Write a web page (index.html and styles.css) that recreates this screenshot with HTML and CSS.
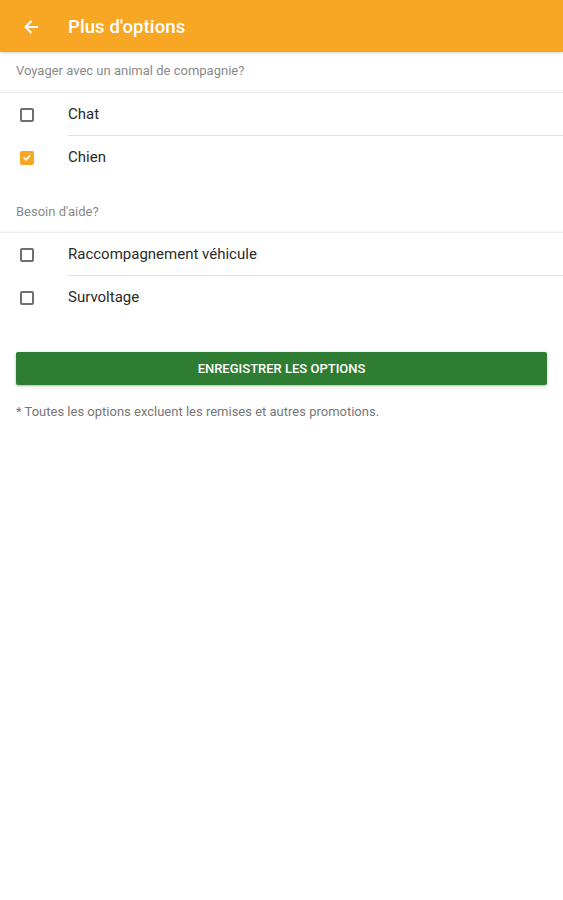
FILE: index.html
```html
<!DOCTYPE html>
<html lang="fr">
<head>
<meta charset="utf-8">
<title>Plus d'options</title>
<link rel="stylesheet" href="styles.css">
</head>
<body>
<header class="appbar">
  <svg class="back" width="16" height="16" viewBox="0 0 16 16"><path d="M15 8H2.5M8.5 2L2.5 8l6 6" fill="none" stroke="#fff" stroke-width="2"/></svg>
  <h1 class="title">Plus d'options</h1>
</header>
<main>
  <div class="section-label">Voyager avec un animal de compagnie?</div>
  <div class="card">
    <label class="row"><span class="box"></span><span class="text">Chat</span></label>
    <label class="row"><span class="box checked"><svg width="11" height="11" viewBox="0 0 11 11"><path d="M2 5.6l2.4 2.4L9 3.2" fill="none" stroke="#fff" stroke-width="1.8"/></svg></span><span class="text">Chien</span></label>
  </div>
  <div class="section-label second">Besoin d'aide?</div>
  <div class="card">
    <label class="row"><span class="box"></span><span class="text">Raccompagnement véhicule</span></label>
    <label class="row"><span class="box"></span><span class="text">Survoltage</span></label>
  </div>
  <div class="actions">
    <button class="save">ENREGISTRER LES OPTIONS</button>
    <p class="note">* Toutes les options excluent les remises et autres promotions.</p>
  </div>
</main>
</body>
</html>
```
FILE: styles.css
```css
* { box-sizing: border-box; }
html, body { margin: 0; padding: 0; background: #fff; }
body { font-family: Roboto, "Noto Sans", sans-serif; width: 563px; height: 900px; overflow: hidden; }
.appbar {
  height: 52px;
  background: #f8a725;
  display: flex;
  align-items: center;
  box-shadow: 0 1px 3px rgba(0,0,0,0.18);
  position: relative;
  z-index: 2;
}
.back { margin-left: 23px; margin-top: 2px; }
.title {
  margin: 2px 0 0 29px;
  color: #fff;
  font-size: 18.5px;
  font-weight: 500;
  letter-spacing: 0.1px;
}
.section-label {
  height: 40px;
  padding: 11px 0 0 16px;
  font-size: 13px;
  color: #8a8a8a;
}
.section-label.second { height: 53px; padding-top: 25px; }
.card {
  border-top: 1px solid #ececec;
  box-shadow: 0 -1px 2px rgba(0,0,0,0.04);
}
.row {
  display: flex;
  align-items: center;
  height: 43px;
}
.box {
  width: 14px; height: 14px;
  margin-left: 20px;
  margin-right: 34px;
  border: 2px solid #6f6f6f;
  border-radius: 2px;
  flex: none;
  display: flex;
  align-items: center;
  justify-content: center;
}
.box.checked { background: #f8a725; border-color: #f8a725; }
.text {
  flex: 1;
  align-self: stretch;
  display: flex;
  align-items: center;
  padding-bottom: 2px;
  font-size: 15px;
  color: #2a2a2a;
}
.row + .row .text { border-top: 1px solid #e4e4e4; margin-top: -1px; }
.actions { padding: 33px 16px 0; }
.save {
  display: block;
  width: 100%;
  height: 33px;
  border: none;
  border-radius: 2px;
  background: #2e7d32;
  color: #fff;
  font-family: Roboto, sans-serif;
  font-weight: 500;
  font-size: 13px;
  box-shadow: 0 1px 3px rgba(0,0,0,0.3);
}
.note {
  margin: 19px 0 0;
  font-size: 13px;
  color: #777;
}
```
